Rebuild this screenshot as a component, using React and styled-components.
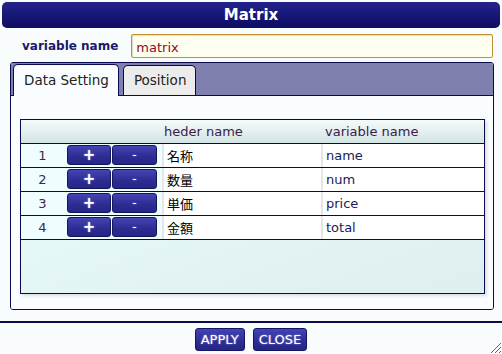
import styled, { createGlobalStyle } from "styled-components";

const GlobalStyle = createGlobalStyle`
  html, body {
    margin: 0;
    padding: 0;
    background: #f8fcfd;
  }
  body {
    font-family: "DejaVu Sans", Verdana, "Noto Sans CJK JP", sans-serif;
  }
`;

const Dialog = styled.div`
  position: relative;
  width: 502px;
  height: 354px;
  display: flex;
  flex-direction: column;
  background: #f8fcfd;
  overflow: hidden;
`;

const TitleBar = styled.div`
  margin: 2px 2px 0 2px;
  height: 26px;
  border-radius: 5px;
  background: linear-gradient(#23238c, #0c0c62);
  color: #fff;
  font-weight: bold;
  font-size: 15px;
  display: flex;
  align-items: center;
  justify-content: center;
`;

const NameRow = styled.div`
  display: flex;
  align-items: center;
  margin: 6px 9px 0 22px;
  gap: 13px;
`;

const Label = styled.label`
  color: #1a1a6a;
  font-weight: bold;
  font-size: 12px;
  white-space: nowrap;
`;

const NameInput = styled.input`
  flex: 1;
  height: 24px;
  box-sizing: border-box;
  border: 1px solid #c59030;
  border-radius: 2px;
  background: #fffff0;
  box-shadow: inset 1px 1px 1px rgba(0, 0, 0, 0.15);
  color: #8a0a2a;
  font-family: inherit;
  font-size: 13px;
  padding: 2px 4px 0 4px;
  outline: none;
`;

const TabBox = styled.div`
  margin: 4px 8px 0 10px;
  height: 248px;
  box-sizing: border-box;
  border: 1px solid #0a0a50;
  border-radius: 3px;
  display: flex;
  flex-direction: column;
  overflow: hidden;
`;

const TabStrip = styled.div`
  height: 32px;
  background: #8080b0;
  display: flex;
  align-items: flex-end;
  padding-left: 2px;
  gap: 4px;
  border-bottom: 1px solid #0a0a50;
  flex-shrink: 0;
`;

const Tab = styled.div`
  height: ${(p) => (p.$active ? "32px" : "30px")};
  margin-bottom: ${(p) => (p.$active ? "-1px" : "0")};
  box-sizing: border-box;
  padding: 0 9px 2px 10px;
  border: 1px solid #0a0a50;
  border-bottom: 0;
  border-radius: 5px 5px 0 0;
  background: ${(p) => (p.$active ? "#f9fdff" : "#ececec")};
  color: #222;
  font-size: 13.5px;
  display: flex;
  align-items: center;
`;

const Panel = styled.div`
  flex: 1;
  background: #f9fdff;
  padding: 23px 8px 15px 9px;
  display: flex;
`;

const Table = styled.div`
  flex: 1;
  border: 1px solid #0a0a50;
  box-shadow: 2px 2px 3px rgba(0, 0, 0, 0.12);
  display: flex;
  flex-direction: column;
  background: linear-gradient(160deg, #e9fcfc, #dfeeee);
`;

const HeaderRow = styled.div`
  height: 23px;
  display: grid;
  grid-template-columns: 142px 159px 1fr;
  align-items: center;
  background: linear-gradient(#f4fafa, #d4e4e4);
  border-bottom: 1px solid #0a0a50;
  color: #3a1a4a;
  font-size: 13px;
`;

const HeadCell = styled.div`
  padding-left: ${(p) => p.$pad || 0}px;
`;

const Row = styled.div`
  height: 23px;
  display: grid;
  grid-template-columns: 46px 45px 46px 4px 159px 1fr;
  border-bottom: 1px solid #0a0a50;
  background: #fff;
`;

const NumCell = styled.div`
  background: #f0fdff;
  display: flex;
  align-items: center;
  justify-content: center;
  padding-right: 3px;
  color: #3a2a4a;
  font-size: 13px;
`;

const BtnCell = styled.div`
  background: #f0fdff;
  padding: 1px 1px 2px 0;
  display: flex;
`;

const Spacer = styled.div`
  background: #f0fdff;
`;

const BlueButton = styled.button`
  flex: ${(p) => (p.$fill ? 1 : "none")};
  box-sizing: border-box;
  border: 1px solid #141460;
  border-radius: 3px;
  background: linear-gradient(#4444b4, #2c2c92 60%, #262688);
  color: #fff;
  font-family: inherit;
  font-size: ${(p) => p.$size || 12}px;
  font-weight: ${(p) => (p.$bold ? "bold" : "normal")};
  padding: 0;
  cursor: pointer;
  text-shadow: 0 0 2px rgba(200, 200, 255, 0.7);
`;

const TextCell = styled.div`
  display: flex;
  align-items: center;
  padding-left: 3px;
  border-left: 2px solid #e6e6e6;
  color: ${(p) => p.$color || "#000"};
  font-size: 13px;
`;

const Footer = styled.div`
  margin-top: 11px;
  border-top: 2px solid #0a0a50;
  flex: 1;
  display: flex;
  justify-content: center;
  gap: 8px;
  padding-top: 5px;
  align-items: flex-start;
`;

const FooterButton = styled(BlueButton)`
  height: 23px;
  padding: 0 5px;
  font-size: 13px;
`;

const Grip = styled.svg`
  position: absolute;
  right: 0;
  bottom: 0;
`;

const rows = [
  { n: 1, head: "名称", name: "name" },
  { n: 2, head: "数量", name: "num" },
  { n: 3, head: "単価", name: "price" },
  { n: 4, head: "金額", name: "total" },
];

function App() {
  return (
    <Dialog>
      <GlobalStyle />
      <TitleBar>Matrix</TitleBar>
      <NameRow>
        <Label>variable name</Label>
        <NameInput defaultValue="matrix" />
      </NameRow>
      <TabBox>
        <TabStrip>
          <Tab $active>Data Setting</Tab>
          <Tab>Position</Tab>
        </TabStrip>
        <Panel>
          <Table>
            <HeaderRow>
              <HeadCell />
              <HeadCell $pad={1}>heder name</HeadCell>
              <HeadCell $pad={3}>variable name</HeadCell>
            </HeaderRow>
            {rows.map((r) => (
              <Row key={r.n}>
                <NumCell>{r.n}</NumCell>
                <BtnCell>
                  <BlueButton $fill $bold $size={15}>+</BlueButton>
                </BtnCell>
                <BtnCell>
                  <BlueButton $fill>-</BlueButton>
                </BtnCell>
                <Spacer />
                <TextCell>{r.head}</TextCell>
                <TextCell $color="#1a1a5a">{r.name}</TextCell>
              </Row>
            ))}
          </Table>
        </Panel>
      </TabBox>
      <Footer>
        <FooterButton>APPLY</FooterButton>
        <FooterButton>CLOSE</FooterButton>
      </Footer>
      <Grip width="14" height="14" viewBox="0 0 14 14">
        <path d="M13 3 L3 13 M13 7 L7 13 M13 11 L11 13" stroke="#666" strokeWidth="1" />
      </Grip>
    </Dialog>
  );
}

export default App;
